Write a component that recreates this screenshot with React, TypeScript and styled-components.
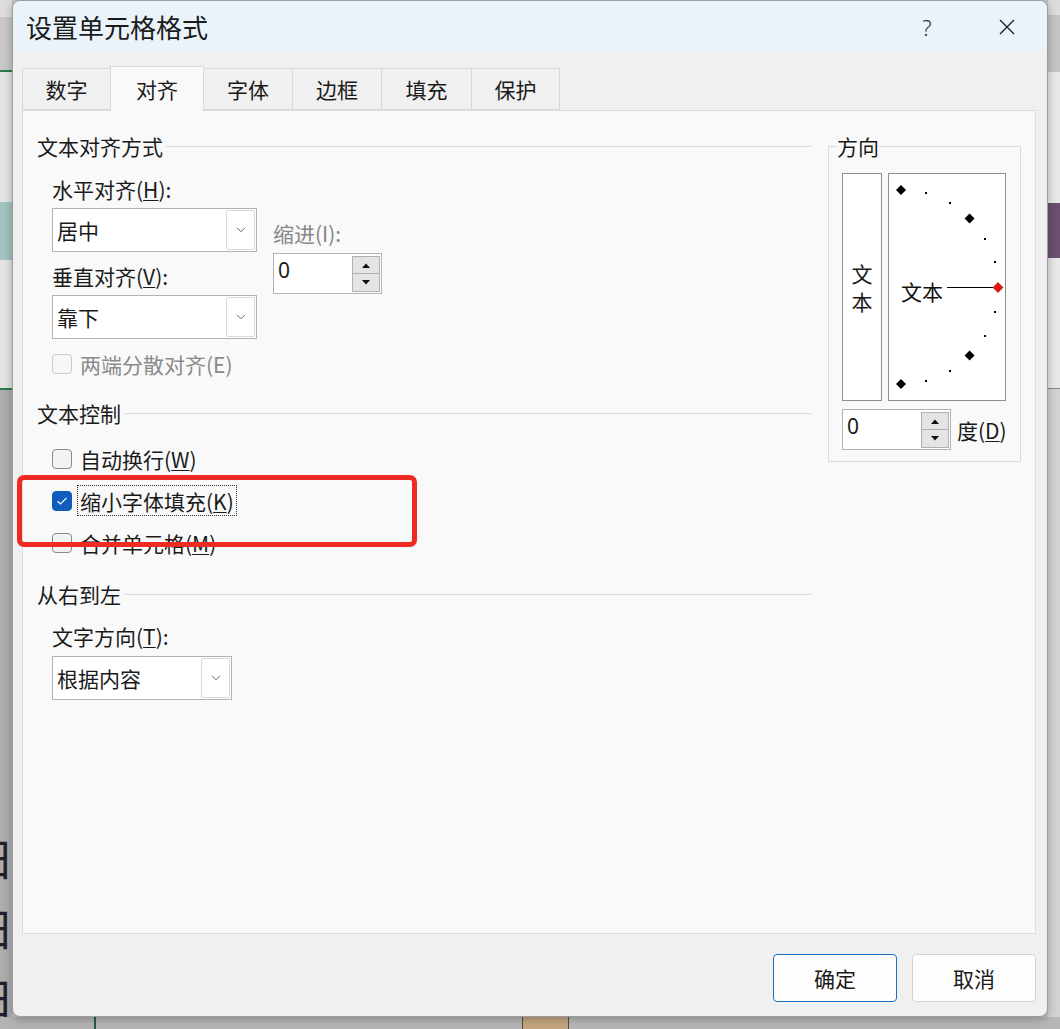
import React from 'react';
import styled, { createGlobalStyle } from 'styled-components';

const uiFont = `"Noto Sans CJK SC", "Noto Sans", sans-serif`;

const GlobalStyle = createGlobalStyle`
  html, body {
    margin: 0;
    padding: 0;
  }

  body {
    width: 1060px;
    height: 1029px;
    overflow: hidden;
    background: #c4c4c4;
    font-family: ${uiFont};
    color: #1a1a1a;
  }

  * {
    box-sizing: border-box;
  }
`;

// ---- backdrop (the spreadsheet behind the dialog) ----

const Desktop = styled.div`
  display: grid;
  grid-template-columns: 12px 1036px 12px;
  grid-template-rows: 1017px 12px;
  width: 1060px;
  height: 1029px;
`;

const Strip = styled.div`
  display: flex;
  flex-direction: column;
  overflow: hidden;
`;

const BottomStrip = styled.div`
  grid-column: 1 / -1;
  display: flex;
  overflow: hidden;
`;

const Band = styled.div<{ $size?: number; $bg: string; $edge?: string }>`
  flex: ${(p) => (p.$size ? `0 0 ${p.$size}px` : '1')};
  background: ${(p) => p.$bg};
  ${(p) => (p.$edge ? `box-shadow: inset 1px 0 ${p.$edge}, inset -1px 0 ${p.$edge};` : '')}
`;

const GlyphBand = styled.div`
  flex: 1;
  display: flex;
  flex-direction: column;
  padding-top: 432px;
  background: #adadad;
`;

const Glyph = styled.span`
  display: block;
  margin-left: -33px;
  font-size: 44px;
  line-height: 70px;
  color: #20202a;
`;

// ---- dialog frame ----

const Dialog = styled.div`
  grid-column: 2;
  grid-row: 1;
  position: relative;
  z-index: 1;
  display: flex;
  flex-direction: column;
  background: #f0f0f0;
  border: 1px solid #9c9c9c;
  border-radius: 8px;
  box-shadow: 0 2px 10px rgba(0, 0, 0, 0.28);
  overflow: hidden;
`;

const TitleBar = styled.div`
  flex: none;
  display: flex;
  align-items: center;
  height: 51px;
  padding-left: 13px;
  background: #eaf3fa;
`;

const Title = styled.div`
  flex: 1;
  font-size: 26px;
  line-height: 30px;
  color: #1b1b1b;
`;

const TitleButtons = styled.div`
  display: flex;
  gap: 34px;
  margin-right: 17px;
`;

const TitleButton = styled.div`
  display: flex;
  align-items: center;
  justify-content: center;
  width: 46px;
  height: 51px;
  font-family: "Noto Sans", sans-serif;
  font-weight: 300;
  font-size: 22px;
  color: #333;
`;

const DialogBody = styled.div`
  display: flex;
  flex-direction: column;
  padding: 14px 11px 14px 9px;
`;

const TabStrip = styled.div`
  display: flex;
  align-items: flex-end;
  height: 44px;
`;

const Tab = styled.div<{ $width: number; $active?: boolean }>`
  display: flex;
  align-items: center;
  justify-content: center;
  width: ${(p) => p.$width}px;
  height: ${(p) => (p.$active ? 45 : 42)}px;
  margin-bottom: ${(p) => (p.$active ? -1 : 0)}px;
  margin-left: -1px;
  border: 1px solid #d9d9d9;
  border-bottom: ${(p) => (p.$active ? 'none' : '1px solid #d9d9d9')};
  background: ${(p) => (p.$active ? '#f9f9f9' : '#f0f0f0')};
  font-size: 21px;
  line-height: 24px;
  ${(p) => (p.$active ? 'position: relative; z-index: 1;' : '')}

  &:first-child {
    margin-left: 0;
  }
`;

const Panel = styled.div`
  position: relative;
  display: flex;
  height: 824px;
  padding: 23px 14px 0 14px;
  border: 1px solid #dcdcdc;
  background: #f9f9f9;
`;

const Footer = styled.div`
  display: flex;
  justify-content: flex-end;
  gap: 15px;
  margin-top: 20px;
`;

const DialogButton = styled.div<{ $primary?: boolean }>`
  display: flex;
  align-items: center;
  justify-content: center;
  width: 124px;
  height: 48px;
  border: 1px solid ${(p) => (p.$primary ? '#1b6ec2' : '#d3d3d3')};
  border-radius: 4px;
  background: #fdfdfd;
  font-size: 21px;
  line-height: 24px;
`;

// ---- panel content ----

const AlignSection = styled.div`
  display: flex;
  flex-direction: column;
  width: 775px;
`;

const GroupHeading = styled.div<{ $mt?: number }>`
  display: flex;
  align-items: center;
  height: 24px;
  margin-top: ${(p) => p.$mt ?? 0}px;
  font-size: 21px;
  line-height: 24px;
  white-space: nowrap;

  &::after {
    content: '';
    flex: 1;
    height: 1px;
    margin-left: 3px;
    background: #dcdcdc;
  }
`;

const Indent = styled.div<{ $mt?: number }>`
  display: flex;
  flex-direction: column;
  align-items: flex-start;
  margin-top: ${(p) => p.$mt ?? 0}px;
  padding-left: 15px;
`;

const AlignGrid = styled.div`
  display: flex;
  gap: 16px;
  margin-top: 19px;
  padding-left: 15px;
`;

const FieldColumn = styled.div<{ $pt?: number }>`
  display: flex;
  flex-direction: column;
  align-items: flex-start;
  padding-top: ${(p) => p.$pt ?? 0}px;
`;

const Label = styled.div<{ $mt?: number; $muted?: boolean }>`
  margin-top: ${(p) => p.$mt ?? 0}px;
  font-size: 21px;
  line-height: 24px;
  color: ${(p) => (p.$muted ? '#868686' : '#1a1a1a')};
  white-space: nowrap;
`;

const U = styled.span`
  text-decoration: underline;
  text-underline-offset: 2px;
  text-decoration-thickness: 1px;
`;

const Combo = styled.div<{ $width: number; $mt?: number }>`
  display: flex;
  align-items: center;
  width: ${(p) => p.$width}px;
  height: 44px;
  margin-top: ${(p) => p.$mt ?? 0}px;
  padding-left: 4px;
  border: 1px solid #b3b3b3;
  background: #fff;
`;

const ComboValue = styled.div`
  flex: 1;
  font-size: 21px;
  line-height: 24px;
`;

const DropButton = styled.div`
  display: flex;
  align-items: center;
  justify-content: center;
  width: 29px;
  height: 40px;
  margin-right: 1px;
  border: 1px solid #dadada;
  border-radius: 2px;
  background: #fff;
`;

const Spin = styled.div<{ $mt?: number }>`
  display: flex;
  width: 109px;
  height: 41px;
  margin-top: ${(p) => p.$mt ?? 0}px;
  border: 1px solid #b3b3b3;
  background: #fff;
`;

const SpinValue = styled.div`
  flex: 1;
  padding: 4px 0 0 4px;
  font-family: "Noto Sans", sans-serif;
  font-size: 21px;
  line-height: 24px;
`;

const SpinButtons = styled.div`
  display: flex;
  flex-direction: column;
  margin: 2px 1px 1px 0;
`;

const SpinButton = styled.div`
  display: flex;
  align-items: center;
  justify-content: center;
  width: 28px;
  height: 18px;
  border: 1px solid #b0b0b0;
  background: #e4e4e4;

  & + & {
    border-top: none;
  }
`;

const CheckRow = styled.div<{ $mt?: number; $disabled?: boolean }>`
  display: flex;
  align-items: center;
  gap: 8px;
  height: 24px;
  margin-top: ${(p) => p.$mt ?? 0}px;
  font-size: 21px;
  line-height: 24px;
  color: ${(p) => (p.$disabled ? '#8a8a8a' : '#1a1a1a')};
  white-space: nowrap;
`;

const CheckBox = styled.div<{ $checked?: boolean; $disabled?: boolean }>`
  display: flex;
  align-items: center;
  justify-content: center;
  flex: none;
  width: 20px;
  height: 20px;
  border-radius: 4px;
  border: 1px solid ${(p) => (p.$checked ? '#0f5cbc' : p.$disabled ? '#c9c9c9' : '#8a8a8a')};
  background: ${(p) => (p.$checked ? '#0f5cbc' : p.$disabled ? '#f7f7f7' : '#f3f3f3')};
`;

const CheckText = styled.span<{ $focused?: boolean }>`
  ${(p) => (p.$focused
    ? `
    margin: -4px 0 -3px -3px;
    padding: 3px 2px 2px 2px;
    border: 1px dotted #333;
  `
    : '')}
`;

const Annotation = styled.div`
  position: absolute;
  left: -6px;
  top: 364px;
  width: 400px;
  height: 72px;
  border: 5px solid #ee2a24;
  border-radius: 7px;
  pointer-events: none;
`;

// ---- orientation group ----

const OrientationGroup = styled.fieldset`
  flex: none;
  align-self: flex-start;
  width: 193px;
  margin: 0 0 0 16px;
  padding: 0;
  min-width: 0;
  border: 1px solid #dcdcdc;
`;

const GroupLegend = styled.legend`
  margin-left: 8px;
  padding: 0;
  font-size: 21px;
  line-height: 24px;
`;

const OrientationBody = styled.div`
  display: flex;
  flex-direction: column;
  padding: 15px 0 11px 13px;
`;

const Previews = styled.div`
  display: flex;
  gap: 6px;
`;

const PreviewBox = styled.div<{ $width: number }>`
  display: flex;
  flex-direction: column;
  align-items: center;
  justify-content: center;
  width: ${(p) => p.$width}px;
  height: 228px;
  border: 1px solid #8f8f8f;
  background: #fff;
`;

const StackedChar = styled.span`
  display: block;
  height: 28px;
  font-size: 21px;
  line-height: 28px;
`;

const AngleRow = styled.div`
  display: flex;
  align-items: center;
  gap: 6px;
  margin-top: 8px;
`;

// ---- drawings ----

const Chevron = () => (
  <svg width='10' height='6' viewBox='0 0 10 6'>
    <path d='M1 0.8 L5 4.8 L9 0.8' fill='none' stroke='#6a6a6a' strokeWidth='1' />
  </svg>
);

const Arrow = ({ up }: { up?: boolean }) => (
  <svg width='10' height='5' viewBox='0 0 10 5'>
    <path d={ up ? 'M1 5 L5 0.5 L9 5 Z' : 'M1 0 L5 4.5 L9 0 Z' } fill='#111' />
  </svg>
);

const CloseIcon = () => (
  <svg width='16' height='16' viewBox='0 0 16 16'>
    <path d='M1 1 L15 15 M15 1 L1 15' stroke='#222' strokeWidth='1.4' />
  </svg>
);

const CheckMark = () => (
  <svg width='12' height='10' viewBox='0 0 12 10'>
    <path d='M1.5 5.2 L4.5 8 L10.5 1.8' fill='none' stroke='#fff' strokeWidth='1.2' />
  </svg>
);

const DIAL_CX = 12;
const DIAL_CY = 113;
const DIAL_R = 97;

const dialPoint = (deg: number) => {
  const rad = (deg * Math.PI) / 180;
  return [DIAL_CX + DIAL_R * Math.cos(rad), DIAL_CY - DIAL_R * Math.sin(rad)];
};

const diamond = (x: number, y: number, s = 5) =>
  `${x},${y - s} ${x + s},${y} ${x},${y + s} ${x - s},${y}`;

const Dial = () => (
  <svg width='116' height='226' viewBox='0 0 116 226'>
    { [90, 45, -45, -90].map((a) => {
      const [x, y] = dialPoint(a);
      return <polygon key={ a } points={ diamond(x, y) } fill='#000' />;
    }) }
    { [75, 60, 30, 15, -15, -30, -60, -75].map((a) => {
      const [x, y] = dialPoint(a);
      return <rect key={ a } x={ Math.round(x) - 1 } y={ Math.round(y) - 1 } width='2' height='2' fill='#000' />;
    }) }
    <line x1='58' y1='113.5' x2='104' y2='113.5' stroke='#000' strokeWidth='1' />
    <polygon points={ diamond(109, 113.5) } fill='#e81414' stroke='#8a0000' strokeWidth='0.6' />
    <text x='12' y='126' fontSize='21' fontFamily={ uiFont } fill='#111'>文本</text>
  </svg>
);

const SpinBox = ({ value, mt }: { value: string; mt?: number }) => (
  <Spin $mt={ mt }>
    <SpinValue>{ value }</SpinValue>
    <SpinButtons>
      <SpinButton><Arrow up /></SpinButton>
      <SpinButton><Arrow /></SpinButton>
    </SpinButtons>
  </Spin>
);

const ComboBox = ({ value, width, mt }: { value: string; width: number; mt?: number }) => (
  <Combo $width={ width } $mt={ mt }>
    <ComboValue>{ value }</ComboValue>
    <DropButton><Chevron /></DropButton>
  </Combo>
);

const tabs = [
  { label: '数字', width: 89 },
  { label: '对齐', width: 94, active: true },
  { label: '字体', width: 90 },
  { label: '边框', width: 90 },
  { label: '填充', width: 91 },
  { label: '保护', width: 89 },
];

export default function App() {
  return (
    <>
      <GlobalStyle />
      <Desktop>
        <Strip>
          <Band $size={ 17 } $bg='#dedede' />
          <Band $size={ 53 } $bg='#c8c8c8' />
          <Band $size={ 2 } $bg='#2b7a4b' />
          <Band $size={ 130 } $bg='#e4e4e4' />
          <Band $size={ 58 } $bg='#a3c4c1' />
          <Band $size={ 128 } $bg='#e4e4e4' />
          <Band $size={ 2 } $bg='#2b7a4b' />
          <GlyphBand>
            <Glyph>田</Glyph>
            <Glyph>田</Glyph>
            <Glyph>田</Glyph>
          </GlyphBand>
        </Strip>

        <Dialog>
          <TitleBar>
            <Title>设置单元格格式</Title>
            <TitleButtons>
              <TitleButton>?</TitleButton>
              <TitleButton><CloseIcon /></TitleButton>
            </TitleButtons>
          </TitleBar>

          <DialogBody>
            <TabStrip>
              { tabs.map((t) => (
                <Tab key={ t.label } $width={ t.width } $active={ t.active }>{ t.label }</Tab>
              )) }
            </TabStrip>

            <Panel>
              <AlignSection>
                <GroupHeading>文本对齐方式</GroupHeading>
                <AlignGrid>
                  <FieldColumn>
                    <Label>水平对齐(<U>H</U>):</Label>
                    <ComboBox value='居中' width={ 205 } mt={ 7 } />
                    <Label $mt={ 12 }>垂直对齐(<U>V</U>):</Label>
                    <ComboBox value='靠下' width={ 205 } mt={ 7 } />
                  </FieldColumn>
                  <FieldColumn $pt={ 44 }>
                    <Label $muted>缩进(I):</Label>
                    <SpinBox value='0' mt={ 8 } />
                  </FieldColumn>
                </AlignGrid>
                <Indent $mt={ 13 }>
                  <CheckRow $disabled>
                    <CheckBox $disabled />
                    <CheckText>两端分散对齐(E)</CheckText>
                  </CheckRow>
                </Indent>

                <GroupHeading $mt={ 25 }>文本控制</GroupHeading>
                <Indent $mt={ 22 }>
                  <CheckRow>
                    <CheckBox />
                    <CheckText>自动换行(<U>W</U>)</CheckText>
                  </CheckRow>
                  <CheckRow $mt={ 18 }>
                    <CheckBox $checked><CheckMark /></CheckBox>
                    <CheckText $focused>缩小字体填充(<U>K</U>)</CheckText>
                  </CheckRow>
                  <CheckRow $mt={ 18 }>
                    <CheckBox />
                    <CheckText>合并单元格(<U>M</U>)</CheckText>
                  </CheckRow>
                </Indent>

                <GroupHeading $mt={ 27 }>从右到左</GroupHeading>
                <Indent $mt={ 18 }>
                  <Label>文字方向(<U>T</U>):</Label>
                  <ComboBox value='根据内容' width={ 180 } mt={ 8 } />
                </Indent>
              </AlignSection>

              <OrientationGroup>
                <GroupLegend>方向</GroupLegend>
                <OrientationBody>
                  <Previews>
                    <PreviewBox $width={ 40 }>
                      <StackedChar>文</StackedChar>
                      <StackedChar>本</StackedChar>
                    </PreviewBox>
                    <PreviewBox $width={ 118 }>
                      <Dial />
                    </PreviewBox>
                  </Previews>
                  <AngleRow>
                    <SpinBox value='0' />
                    <Label>度(<U>D</U>)</Label>
                  </AngleRow>
                </OrientationBody>
              </OrientationGroup>

              <Annotation />
            </Panel>

            <Footer>
              <DialogButton $primary>确定</DialogButton>
              <DialogButton>取消</DialogButton>
            </Footer>
          </DialogBody>
        </Dialog>

        <Strip>
          <Band $size={ 15 } $bg='#dcdcdc' />
          <Band $size={ 57 } $bg='#c4c4c4' />
          <Band $size={ 131 } $bg='#e8e8e8' />
          <Band $size={ 55 } $bg='#6b5070' />
          <Band $size={ 130 } $bg='#e8e8e8' />
          <Band $size={ 1 } $bg='#8a8a8a' />
          <Band $bg='#d3d3d3' />
        </Strip>

        <BottomStrip>
          <Band $size={ 94 } $bg='#b3b3b3' />
          <Band $size={ 2 } $bg='#23603e' />
          <Band $size={ 426 } $bg='#b5b5b5' />
          <Band $size={ 47 } $bg='#c5a680' $edge='#5a4a36' />
          <Band $bg='#b7b7b7' />
        </BottomStrip>
      </Desktop>
    </>
  );
}
